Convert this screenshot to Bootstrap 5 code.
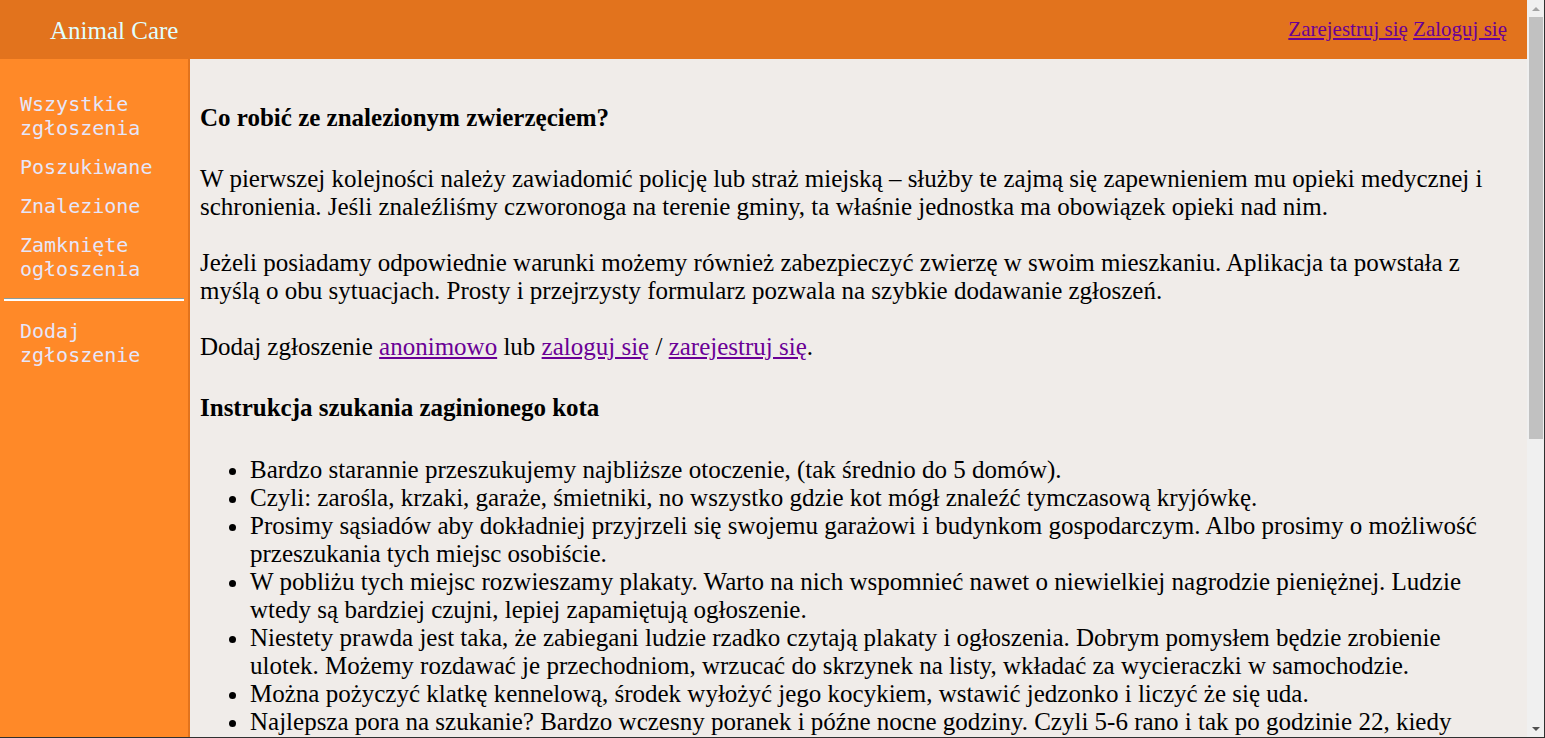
<!DOCTYPE html>
<html lang="pl">
<head>
<meta charset="utf-8">
<meta name="viewport" content="width=device-width, initial-scale=1">
<title>Animal Care</title>
<link href="https://cdn.jsdelivr.net/npm/bootstrap@5.3.0/dist/css/bootstrap.min.css" rel="stylesheet">
<style>
  body { font-family: "Liberation Serif", serif; font-size: 25px; line-height: 28px; color: #000; background: #f0ece9; }
  .app-frame { border-right: 1px solid #303030; border-bottom: 1px solid #303030; }
  .topbar { background: #e2731d; min-height: 59px; padding: 0 20px 0 50px; }
  .brand { color: #e0ffff; padding-top: 2px; }
  .account { font-size: 21px; line-height: 24px; padding-bottom: 2px; }
  .visited { color: #6a0096; }
  .side { width: 190px; background: #ff8928; border-right: 2px solid #e2731d; padding: 33px 4px 0; }
  .side a { font-family: "DejaVu Sans Mono", monospace; font-size: 20px; line-height: 24px; color: #e6e6fa; padding: 0 16px; margin-bottom: 15px; }
  .side hr { margin: 17px 0 18px; border-top: 1px solid #8c9c9c; border-bottom: 2px solid #fff; opacity: 1; }
  .content { padding: 45px 20px 0 10px; }
  .content h4 { font-size: 25px; line-height: 28px; font-weight: 700; margin-bottom: 33px; }
  .content p { margin-bottom: 28px; }
  .content p + h4 { margin: 33px 0 34px; }
  .content ul { padding-left: 50px; }
  .scroll-track { width: 17px; background: #f0f0f0; padding: 0 1px 0 2px; }
  .scroll-cap { height: 17px; }
  .scroll-thumb { background: #c1c1c1; height: 60%; }
</style>
<script src="https://cdn.jsdelivr.net/npm/bootstrap@5.3.0/dist/js/bootstrap.bundle.min.js"></script>
</head>
<body>
<div class="app-frame d-flex vh-100 overflow-hidden">
  <div class="d-flex flex-column flex-grow-1 overflow-hidden">
    <header class="topbar d-flex justify-content-between align-items-center flex-shrink-0">
      <div class="brand">Animal Care</div>
      <nav class="account"><a class="visited" href="#">Zarejestruj się</a> <a class="visited" href="#">Zaloguj się</a></nav>
    </header>
    <div class="d-flex flex-grow-1 overflow-hidden">
      <nav class="side flex-shrink-0">
        <a class="d-block text-decoration-none" href="#">Wszystkie zgłoszenia</a>
        <a class="d-block text-decoration-none" href="#">Poszukiwane</a>
        <a class="d-block text-decoration-none" href="#">Znalezione</a>
        <a class="d-block text-decoration-none" href="#">Zamknięte ogłoszenia</a>
        <hr>
        <a class="d-block text-decoration-none" href="#">Dodaj zgłoszenie</a>
      </nav>
      <main class="content flex-grow-1">
        <h4>Co robić ze znalezionym zwierzęciem?</h4>
        <p>W pierwszej kolejności należy zawiadomić policję lub straż miejską – służby te zajmą się zapewnieniem mu opieki medycznej i schronienia. Jeśli znaleźliśmy czworonoga na terenie gminy, ta właśnie jednostka ma obowiązek opieki nad nim.</p>
        <p>Jeżeli posiadamy odpowiednie warunki możemy również zabezpieczyć zwierzę w swoim mieszkaniu. Aplikacja ta powstała z myślą o obu sytuacjach. Prosty i przejrzysty formularz pozwala na szybkie dodawanie zgłoszeń.</p>
        <p>Dodaj zgłoszenie <a class="visited" href="#">anonimowo</a> lub <a class="visited" href="#">zaloguj się</a> / <a class="visited" href="#">zarejestruj się</a>.</p>
        <h4>Instrukcja szukania zaginionego kota</h4>
        <ul class="mb-0">
          <li>Bardzo starannie przeszukujemy najbliższe otoczenie, (tak średnio do 5 domów).</li>
          <li>Czyli: zarośla, krzaki, garaże, śmietniki, no wszystko gdzie kot mógł znaleźć tymczasową kryjówkę.</li>
          <li>Prosimy sąsiadów aby dokładniej przyjrzeli się swojemu garażowi i budynkom gospodarczym. Albo prosimy o możliwość przeszukania tych miejsc osobiście.</li>
          <li>W pobliżu tych miejsc rozwieszamy plakaty. Warto na nich wspomnieć nawet o niewielkiej nagrodzie pieniężnej. Ludzie wtedy są bardziej czujni, lepiej zapamiętują ogłoszenie.</li>
          <li>Niestety prawda jest taka, że zabiegani ludzie rzadko czytają plakaty i ogłoszenia. Dobrym pomysłem będzie zrobienie ulotek. Możemy rozdawać je przechodniom, wrzucać do skrzynek na listy, wkładać za wycieraczki w samochodzie.</li>
          <li>Można pożyczyć klatkę kennelową, środek wyłożyć jego kocykiem, wstawić jedzonko i liczyć że się uda.</li>
          <li>Najlepsza pora na szukanie? Bardzo wczesny poranek i późne nocne godziny. Czyli 5-6 rano i tak po godzinie 22, kiedy</li>
        </ul>
      </main>
    </div>
  </div>
  <div class="scroll-track d-flex flex-column flex-shrink-0" aria-hidden="true">
    <div class="scroll-cap d-flex align-items-center justify-content-center flex-shrink-0"><svg width="8" height="4" viewBox="0 0 8 4"><path d="M0 4L4 0L8 4Z" fill="#a3a3a3"/></svg></div>
    <div class="flex-grow-1"><div class="scroll-thumb"></div></div>
    <div class="scroll-cap d-flex align-items-center justify-content-center flex-shrink-0"><svg width="8" height="4" viewBox="0 0 8 4"><path d="M0 0L4 4L8 0Z" fill="#505050"/></svg></div>
  </div>
</div>
</body>
</html>
